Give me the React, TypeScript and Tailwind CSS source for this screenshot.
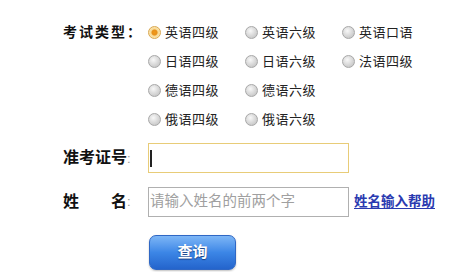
import React from "react";

const types = [
  ["英语四级", "英语六级", "英语口语"],
  ["日语四级", "日语六级", "法语四级"],
  ["德语四级", "德语六级"],
  ["俄语四级", "俄语六级"],
];

const Radio = ({ checked }: { checked?: boolean }) =>
  checked ? (
    <span className="w-[13px] h-[13px] rounded-full border border-[#d9a850] bg-[radial-gradient(circle_at_50%_50%,#f09818_0,#e8901a_33%,#f8d890_45%,#fff0d0_100%)] shrink-0" />
  ) : (
    <span className="w-[13px] h-[13px] rounded-full border border-[#a8a8a8] bg-[radial-gradient(circle_at_40%_35%,#f8f8f8_0,#dcdcdc_45%,#bcbcbc_100%)] shrink-0" />
  );

export default function App() {
  return (
    <div className="w-[460px] h-[272px] bg-white overflow-hidden pt-[18px] pl-[63px] font-['Liberation_Sans','Noto_Sans_CJK_SC',sans-serif] text-[#222]">
      {/* 考试类型 */}
      <div className="flex">
        <div className="w-[85px] h-[29px] leading-[29px] text-[14px] font-bold tracking-[2px] text-[#111]">
          考试类型：
        </div>
        <div className="grid grid-cols-[97px_97px_97px] auto-rows-[29px]">
          {types.map((row, r) =>
            [0, 1, 2].map((c) =>
              row[c] ? (
                <label key={`${r}-${c}`} className="flex items-center gap-[4px] text-[13px] tracking-[0.5px] text-[#222]">
                  <Radio checked={r === 0 && c === 0} />
                  <span>{row[c]}</span>
                </label>
              ) : (
                <span key={`${r}-${c}`} />
              )
            )
          )}
        </div>
      </div>

      {/* 准考证号 */}
      <div className="flex items-center mt-[9px] h-[30px]">
        <div className="w-[85px] text-[16px] font-bold text-[#111]">
          准考证号<span className="font-normal text-[#999] text-[13px]">:</span>
        </div>
        <div className="relative w-[201px] h-[30px] border border-[#e8cc78] bg-white">
          <span className="absolute left-[1px] top-[6px] w-[1.5px] h-[17px] bg-[#222]" />
        </div>
      </div>

      {/* 姓名 */}
      <div className="flex items-center mt-[14px] h-[30px]">
        <div className="w-[85px] flex text-[16px] font-bold text-[#111]">
          <span>姓</span>
          <span className="ml-[32px]">名</span>
          <span className="font-normal text-[#999] text-[13px] leading-[24px]">:</span>
        </div>
        <div className="w-[201px] h-[30px] border border-[#b0b0b0] flex items-center pl-[1px] text-[14.5px] text-[#a0a0a0]">
          请输入姓名的前两个字
        </div>
        <a className="ml-[5px] text-[13.5px] font-bold text-[#2a3ab0] underline underline-offset-2">
          姓名输入帮助
        </a>
      </div>

      {/* 查询 */}
      <button className="mt-[18px] ml-[86px] w-[87px] h-[35px] rounded-[7px] border border-[#2f67c4] bg-gradient-to-b from-[#7db6f6] via-[#3c86e6] to-[#2464cc] text-white text-[15px] font-bold [text-shadow:0_1px_1px_#1a3f80] shadow-[0_1px_2px_rgba(0,0,0,0.25)]">
        查询
      </button>
    </div>
  );
}
